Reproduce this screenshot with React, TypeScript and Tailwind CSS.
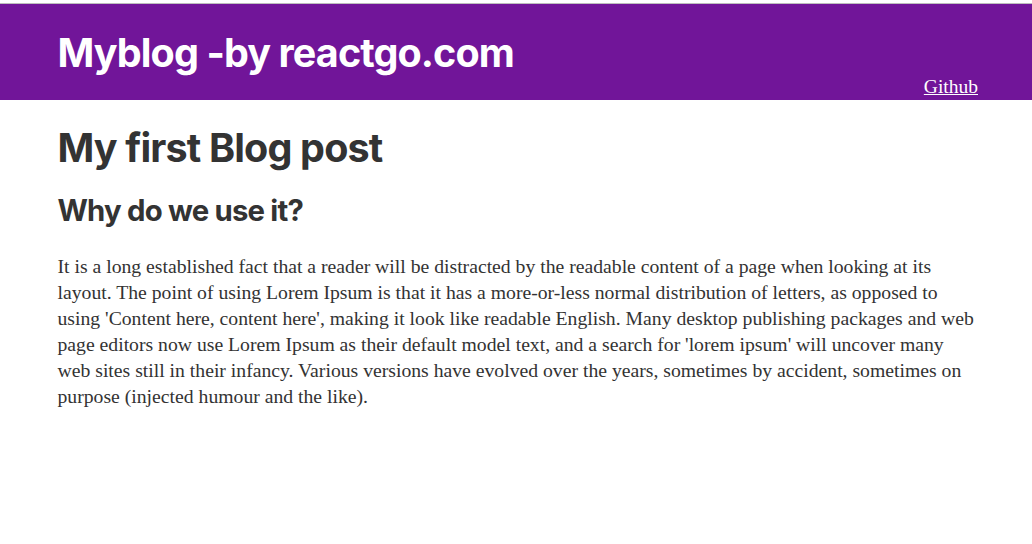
const sans = "font-['Inter','Liberation_Sans',sans-serif]";
const serif = "font-['Liberation_Serif','DejaVu_Serif',serif]";

const body =
  "It is a long established fact that a reader will be distracted by the readable content of a page when looking at its layout. The point of using Lorem Ipsum is that it has a more-or-less normal distribution of letters, as opposed to using 'Content here, content here', making it look like readable English. Many desktop publishing packages and web page editors now use Lorem Ipsum as their default model text, and a search for 'lorem ipsum' will uncover many web sites still in their infancy. Various versions have evolved over the years, sometimes by accident, sometimes on purpose (injected humour and the like).";

function Header() {
  return (
    <header className="h-[97px] bg-[#711599] border-t border-[#bdbdbd]">
      <div className="max-w-[960px] mx-auto pl-[21.5px] pr-[18px] pt-[30px]">
        <h1 className={`${sans} text-[39.5px] leading-none font-bold text-white tracking-[-0.9px]`}>
          Myblog -by reactgo.com
        </h1>
        <div className={`${serif} flex justify-end text-[19.5px] leading-[26px]`}>
          <a href="#" className="text-white underline">
            Github
          </a>
        </div>
      </div>
    </header>
  );
}

export default function App() {
  return (
    <div className="min-h-[544px] bg-white pt-[3px]">
      <Header />
      <main className="max-w-[960px] mx-auto pl-[21.5px] pr-[18px] pt-[27px]">
        <h1 className={`${sans} text-[39.5px] leading-[1.1] font-bold text-[#333] mb-[25px] tracking-[-0.85px]`}>
          My first Blog post
        </h1>
        <h2 className={`${sans} text-[29.3px] leading-[1.1] font-bold text-[#333] mb-[25.5px] tracking-[-0.8px]`}>
          Why do we use it?
        </h2>
        <p className={`${serif} text-[19.7px] leading-[26px] text-[#333]`}>{body}</p>
      </main>
    </div>
  );
}
